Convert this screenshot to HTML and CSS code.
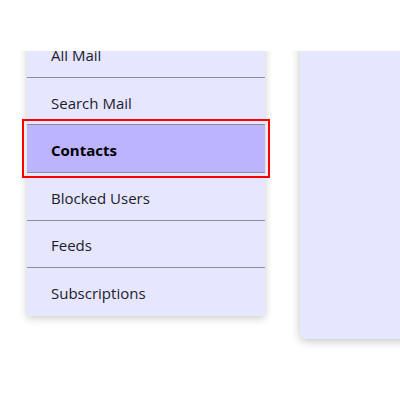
FILE: index.html
```html
<!DOCTYPE html>
<html>
<head>
<meta charset="utf-8">
<link rel="stylesheet" href="styles.css">
</head>
<body>
<div class="viewport">
  <div class="content">
    <ul class="menu">
      <li class="item">All Mail</li>
      <li class="item">Search Mail</li>
      <li class="item active">Contacts</li>
      <li class="item">Blocked Users</li>
      <li class="item">Feeds</li>
      <li class="item">Subscriptions</li>
    </ul>
    <div class="pane"></div>
  </div>
</div>
</body>
</html>
```
FILE: styles.css
```css
html, body {
  margin: 0;
  padding: 0;
  background: #ffffff;
}
body {
  font-family: "Open Sans", "Noto Sans", sans-serif;
  font-size: 15px;
  color: #1c1c2c;
}
.viewport {
  margin-top: 51px;
  height: 349px;
  overflow: hidden;
}
.content {
  margin-top: -20.5px;
  display: flex;
  align-items: flex-start;
  gap: 35px;
  padding-left: 27px;
  width: 600px;
}
.menu {
  list-style: none;
  margin: 0;
  padding: 0;
  width: 238px;
  flex: none;
  background: #e6e6ff;
  box-shadow: 0 2px 8px rgba(0, 0, 0, 0.22);
}
.item {
  box-sizing: border-box;
  height: 47.5px;
  display: flex;
  align-items: center;
  padding-left: 24px;
  padding-top: 3px;
  border-bottom: 1.5px solid #8e8e9a;
}
.item:last-child {
  border-bottom: none;
}
.item.active {
  background: #bcb4ff;
  font-weight: 700;
  color: #000;
  outline: 2px solid #ff0000;
  outline-offset: 3px;
  position: relative;
  border-top: 1.5px solid #8e8e9a;
  margin-top: -1.5px;
  height: 49px;
}
.pane {
  flex: none;
  width: 300px;
  height: 308.5px;
  background: #e6e6ff;
  border-radius: 0 0 5px 5px;
  box-shadow: 0 2px 10px rgba(0, 0, 0, 0.24);
}
```
